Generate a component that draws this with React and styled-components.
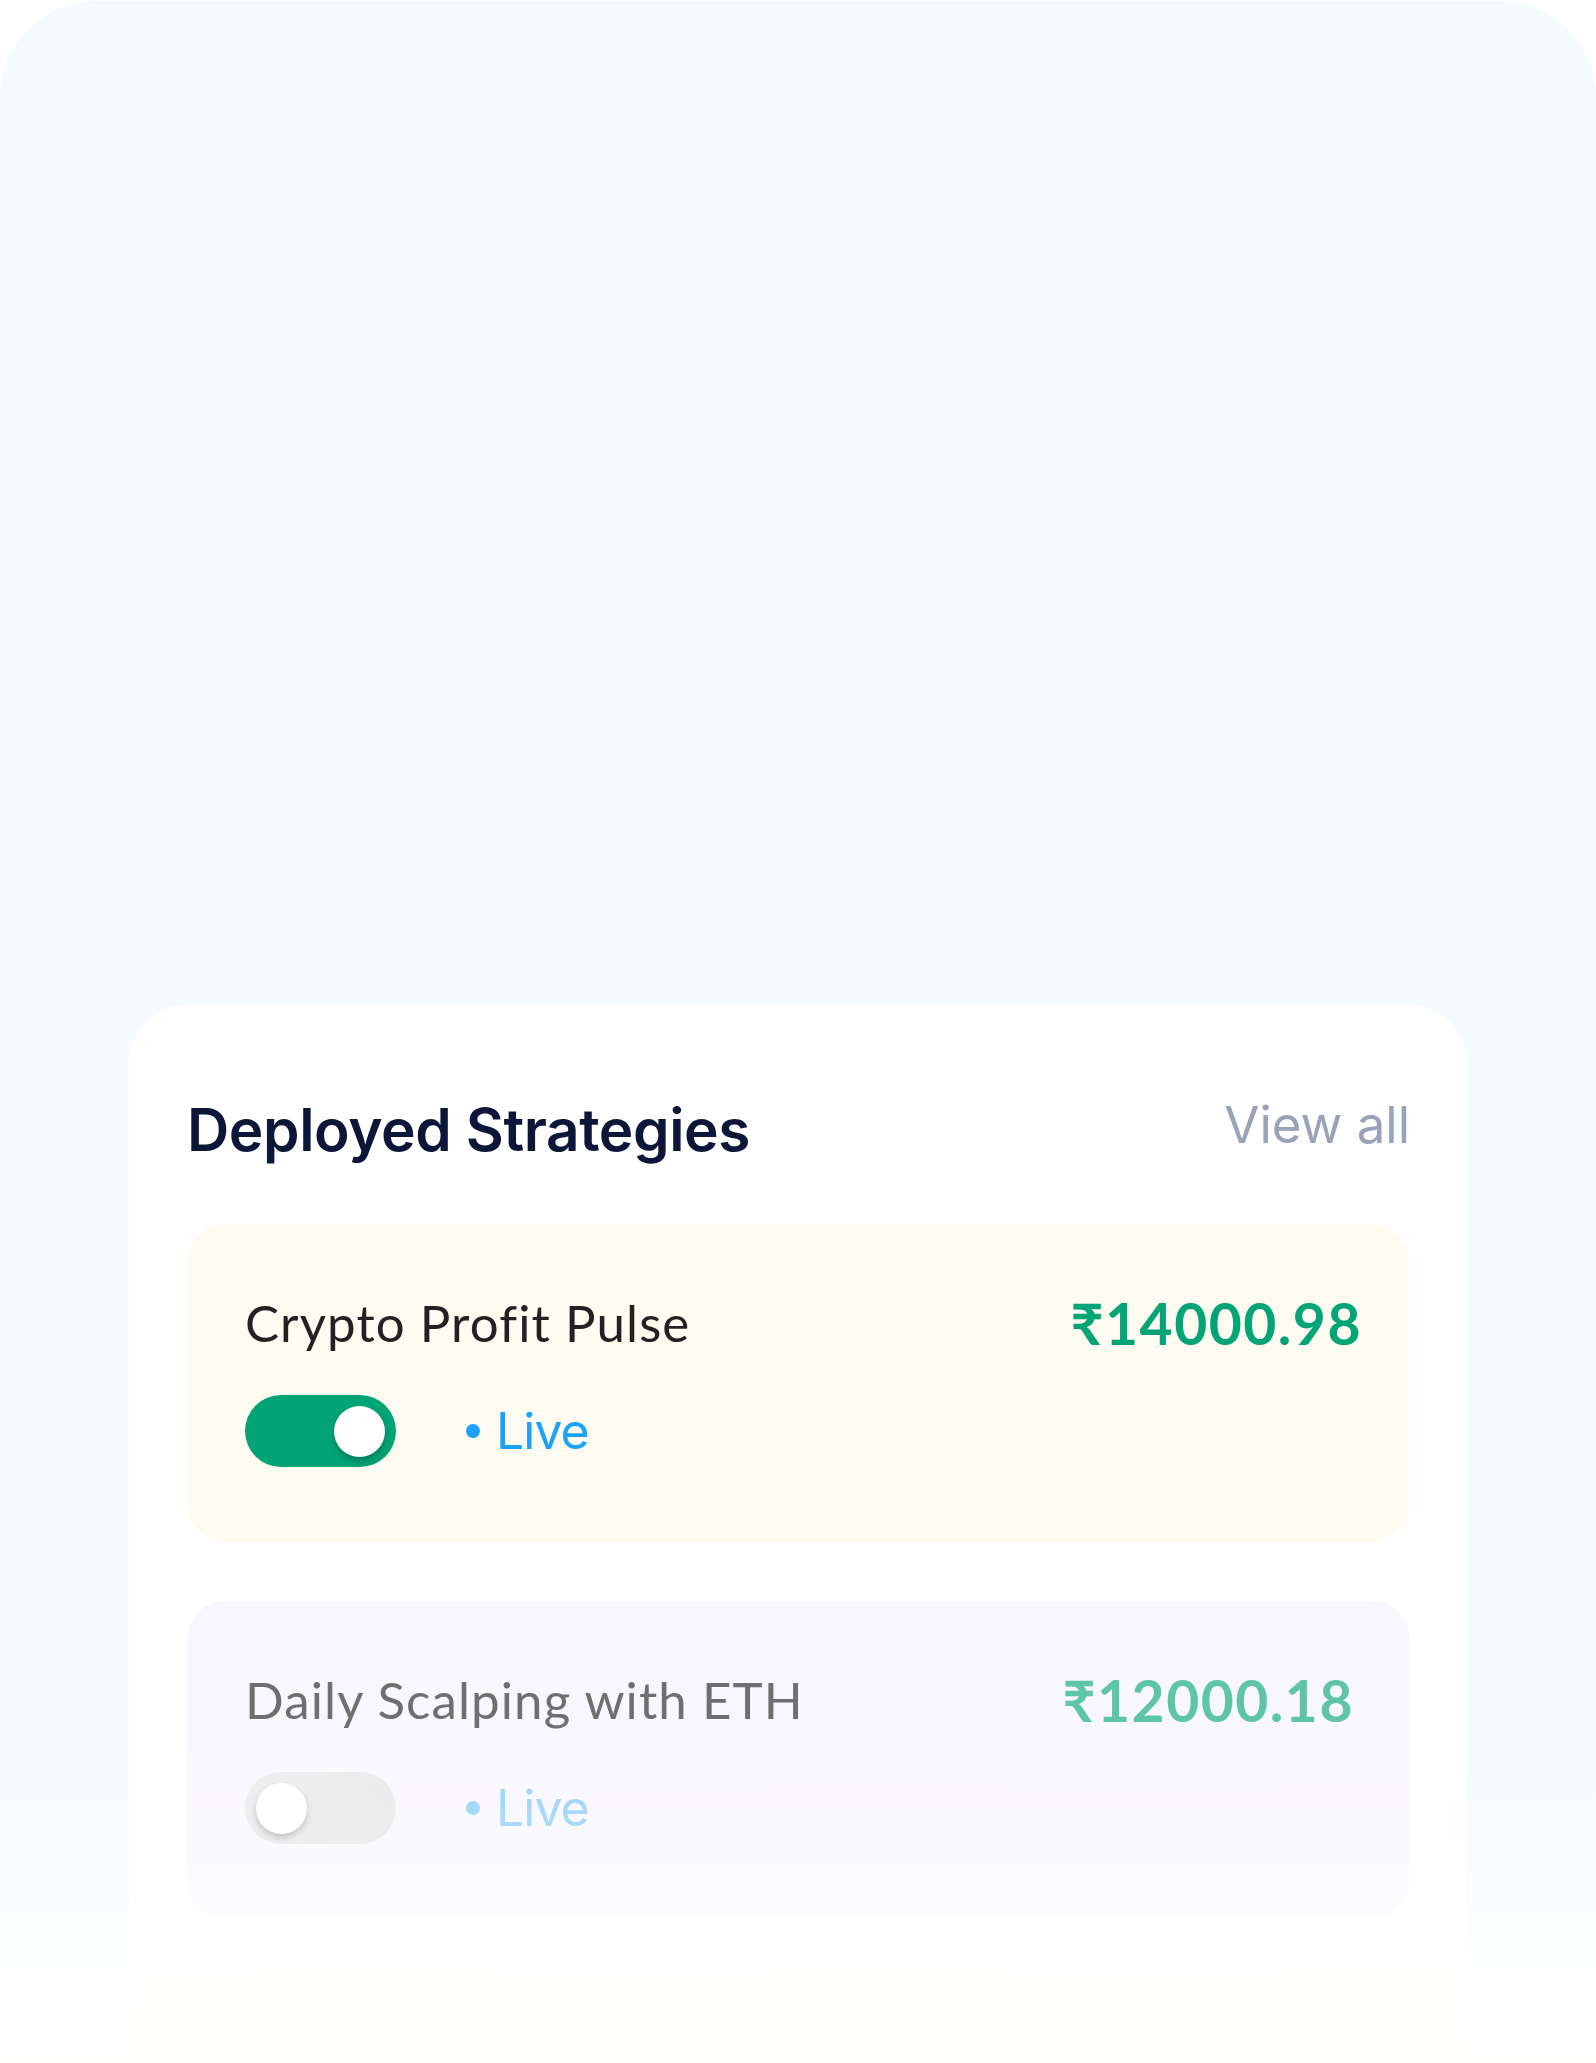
import React from "react"
import styled, { createGlobalStyle } from "styled-components"

const GlobalStyle = createGlobalStyle`
    html, body {
        margin: 0;
        padding: 0;
        background: #ffffff;
    }
    * {
        box-sizing: border-box;
    }
`

const Page = styled.div`
    position: relative;
    width: 1596px;
    height: 2063px;
    overflow: hidden;
    background: #ffffff;
    padding-top: 1px;
`

const Panel = styled.section`
    height: 100%;
    background: #f5fbff;
    border-radius: 96px 96px 0 0;
    padding-top: 1004px;
`

const Sheet = styled.div`
    height: 100%;
    margin: 0 129px;
    background: #ffffff;
    border-radius: 58px 58px 0 0;
    padding: 89px 57px 0 58px;
`

const Header = styled.div`
    display: flex;
    justify-content: space-between;
    align-items: flex-start;
`

const Title = styled.h2`
    margin: 0;
    font-family: 'Inter', sans-serif;
    font-weight: 600;
    font-size: 58.5px;
    line-height: 72px;
    letter-spacing: -0.4px;
    color: #0b1638;
`

const ViewAll = styled.a`
    font-family: 'Inter', sans-serif;
    font-weight: 400;
    font-size: 51px;
    line-height: 62px;
    color: #98a2b8;
    cursor: pointer;
`

const List = styled.div`
    display: flex;
    flex-direction: column;
    gap: 59px;
    margin-top: 58px;
`

const Card = styled.div`
    height: 318px;
    border-radius: 38px;
    background: ${p => p.$bg};
    padding: 69px ${p => p.$right}px 0 58px;
`

const TopRow = styled.div`
    display: flex;
    justify-content: space-between;
    align-items: center;
    height: 60px;
`

const Name = styled.span`
    font-family: 'Lato', 'Noto Sans', sans-serif;
    font-weight: 400;
    font-size: 51px;
    line-height: 60px;
    letter-spacing: 1.1px;
    color: ${p => p.$color};
`

const Amount = styled.span`
    font-family: 'Lato', 'Noto Sans', sans-serif;
    font-weight: 700;
    font-size: 57px;
    line-height: 60px;
    letter-spacing: 1.5px;
    color: ${p => p.$color};
`

const BottomRow = styled.div`
    display: flex;
    align-items: center;
    margin-top: 42px;
`

const Track = styled.div`
    position: relative;
    width: 151px;
    height: 72px;
    border-radius: 36px;
    background: ${p => (p.$on ? "#02a374" : "linear-gradient(160deg, #ececec, #e6e6e6)")};
`

const Knob = styled.span`
    position: absolute;
    top: 11px;
    left: ${p => (p.$on ? "89px" : "11px")};
    width: 51px;
    height: 51px;
    border-radius: 50%;
    background: #ffffff;
    box-shadow: 0 4px 6px rgba(0, 0, 0, 0.22);
`

const Status = styled.div`
    display: flex;
    align-items: center;
    gap: 16px;
    margin-left: 70px;
    font-family: 'Inter', sans-serif;
    font-weight: 400;
    font-size: 50px;
    line-height: 64px;
    letter-spacing: -1px;
    color: ${p => p.$color};
`

const Dot = styled.span`
    width: 14px;
    height: 14px;
    border-radius: 50%;
    background: currentColor;
`

const Fade = styled.div`
    position: absolute;
    left: 0;
    right: 0;
    bottom: 0;
    height: 340px;
    pointer-events: none;
    background: linear-gradient(180deg, rgba(255, 255, 254, 0) 0%, rgba(255, 255, 254, 0.3) 40%, rgba(255, 255, 254, 0.88) 75%, #fffffe 100%);
`

const strategies = [
    {
        name: "Crypto Profit Pulse",
        amount: "₹14000.98",
        on: true,
        right: 48,
        bg: "#fefcf0",
        nameColor: "#222222",
        amountColor: "#03a577",
        liveColor: "#1ca2fa",
    },
    {
        name: "Daily Scalping with ETH",
        amount: "₹12000.18",
        on: false,
        right: 56,
        bg: "#f9f7fe",
        nameColor: "#6f6f6f",
        amountColor: "#5ec6a4",
        liveColor: "#90d0fb",
    },
]

export default function App() {
    return (
        <Page>
            <GlobalStyle />
            <Panel>
                <Sheet>
                    <Header>
                        <Title>Deployed Strategies</Title>
                        <ViewAll>View all</ViewAll>
                    </Header>
                    <List>
                        {strategies.map((s) => (
                            <Card key={s.name} $bg={s.bg} $right={s.right}>
                                <TopRow>
                                    <Name $color={s.nameColor}>{s.name}</Name>
                                    <Amount $color={s.amountColor}>{s.amount}</Amount>
                                </TopRow>
                                <BottomRow>
                                    <Track $on={s.on}>
                                        <Knob $on={s.on} />
                                    </Track>
                                    <Status $color={s.liveColor}>
                                        <Dot />
                                        Live
                                    </Status>
                                </BottomRow>
                            </Card>
                        ))}
                    </List>
                </Sheet>
            </Panel>
            <Fade />
        </Page>
    )
}
